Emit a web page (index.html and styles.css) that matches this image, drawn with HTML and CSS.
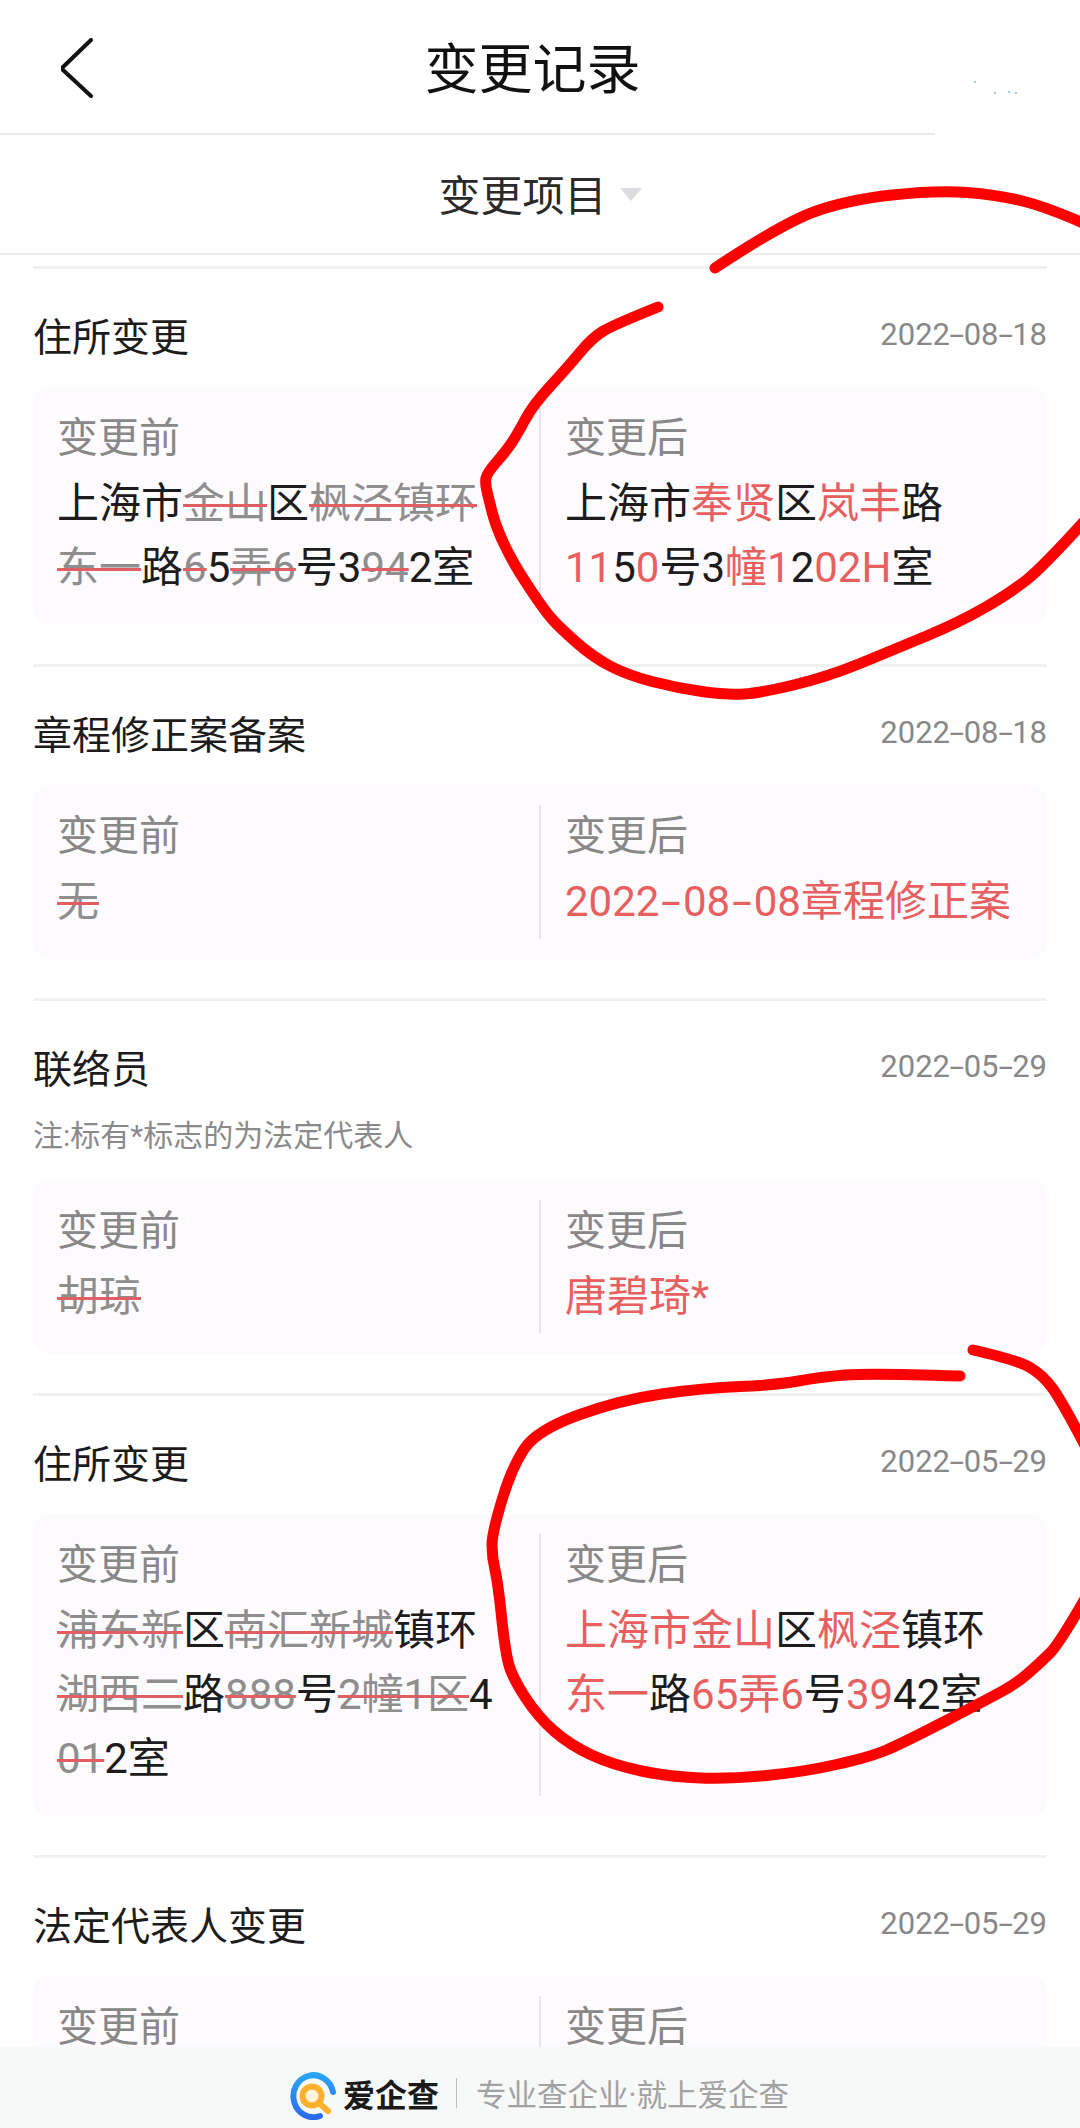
FILE: index.html
```html
<!DOCTYPE html>
<html lang="zh-CN">
<head>
    <meta charset="UTF-8">
    <meta name="viewport" content="width=device-width, initial-scale=1.0">
    <title>变更记录</title>
    <link rel="stylesheet" href="styles.css">
</head>
<body>

<header class="nav">
    <svg class="back" width="32" height="60" viewBox="0 0 32 60">
        <path d="M30 2 L2 29 Q1 30 2 32 L30 58"/>
    </svg>
    <h1 class="nav-title">变更记录</h1>
</header>
<div class="nav-line"></div>

<div class="filter">
    <span>变更项目</span>
    <i class="caret"></i>
</div>

<main class="list">
    <section class="item">
        <div class="item-head">
            <h2>住所变更</h2>
            <span class="date">2022<i class="dash">-</i>08<i class="dash">-</i>18</span>
        </div>
        <div class="card">
            <div class="col">
                <div class="label">变更前</div>
                <p>上海市<s>金山</s>区<s>枫泾镇环</s><br><s>东一</s>路<s>6</s>5<s>弄6</s>号3<s>94</s>2室</p>
            </div>
            <div class="col">
                <div class="label">变更后</div>
                <p>上海市<b>奉贤</b>区<b>岚丰</b>路<br><b>11</b>5<b>0</b>号3<b>幢1</b>2<b>02H</b>室</p>
            </div>
        </div>
    </section>

    <section class="item">
        <div class="item-head">
            <h2>章程修正案备案</h2>
            <span class="date">2022<i class="dash">-</i>08<i class="dash">-</i>18</span>
        </div>
        <div class="card">
            <div class="col">
                <div class="label">变更前</div>
                <p><s>无</s></p>
            </div>
            <div class="col">
                <div class="label">变更后</div>
                <p><b>2022<i class="dash">-</i>08<i class="dash">-</i>08章程修正案</b></p>
            </div>
        </div>
    </section>

    <section class="item">
        <div class="item-head">
            <h2>联络员</h2>
            <span class="date">2022<i class="dash">-</i>05<i class="dash">-</i>29</span>
        </div>
        <div class="note">注:标有*标志的为法定代表人</div>
        <div class="card">
            <div class="col">
                <div class="label">变更前</div>
                <p><s>胡琼</s></p>
            </div>
            <div class="col">
                <div class="label">变更后</div>
                <p><b>唐碧琦*</b></p>
            </div>
        </div>
    </section>

    <section class="item">
        <div class="item-head">
            <h2>住所变更</h2>
            <span class="date">2022<i class="dash">-</i>05<i class="dash">-</i>29</span>
        </div>
        <div class="card">
            <div class="col">
                <div class="label">变更前</div>
                <p><s>浦东新</s>区<s>南汇新城</s>镇环<br><s>湖西二</s>路<s>888</s>号<s>2幢1区</s>4<br><s>01</s>2室</p>
            </div>
            <div class="col">
                <div class="label">变更后</div>
                <p><b>上海市金山</b>区<b>枫泾</b>镇环<br><b>东一</b>路<b>65弄6</b>号<b>39</b>42室</p>
            </div>
        </div>
    </section>

    <section class="item">
        <div class="item-head">
            <h2>法定代表人变更</h2>
            <span class="date">2022<i class="dash">-</i>05<i class="dash">-</i>29</span>
        </div>
        <div class="card">
            <div class="col">
                <div class="label">变更前</div>
            </div>
            <div class="col">
                <div class="label">变更后</div>
            </div>
        </div>
    </section>
</main>

<footer class="foot">
    <svg class="foot-logo" width="46" height="48" viewBox="0 0 46 48">
        <defs>
            <linearGradient id="ring" x1="0" y1="0" x2="0" y2="1">
                <stop offset="0" stop-color="#2aa5f4"/>
                <stop offset="1" stop-color="#2b6bf0"/>
            </linearGradient>
        </defs>
        <path d="M43 20 A20 21 0 1 0 30 44" fill="none" stroke="url(#ring)" stroke-width="6" stroke-linecap="round"/>
        <circle cx="22" cy="24" r="9.5" fill="#fff3dc" stroke="#fdb02c" stroke-width="6"/>
        <path d="M29 31 L38 39" fill="none" stroke="#fdb02c" stroke-width="6" stroke-linecap="round"/>
    </svg>
    <span class="foot-name">爱企查</span>
    <i class="foot-sep"></i>
    <span class="foot-tag">专业查企业·就上爱企查</span>
</footer>

<!-- pen marks drawn on top of the page -->
<svg class="ink" width="1080" height="2128" viewBox="0 0 1080 2128">
    <path d="M715 268 Q783 223 815 211.5 Q847 200 892 195 Q937 190 967.5 192.5 Q998 195 1022.5 201 Q1047 207 1090 226"/>
    <path d="M658 307 Q613 325 602.5 331.5 Q592 338 579.5 353 Q567 368 550 386.5 Q533 405 525.5 419 Q518 433 512.5 441.5 Q507 450 497 461.5 Q487 473 486 478 Q485 483 487 491.5 Q489 500 492.5 513.5 Q496 527 504.5 545 Q513 563 528.5 586.5 Q544 610 552 619 Q560 628 576.5 642.5 Q593 657 610 666 Q627 675 652 681.5 Q677 688 702 691.5 Q727 695 743.5 694 Q760 693 793.5 685 Q827 677 860 663.5 Q893 650 926.5 636 Q960 622 985 607.5 Q1010 593 1026.5 580 Q1043 567 1090 515"/>
    <path d="M960 1376 Q870 1373 845 1375 Q820 1377 798.5 1381 Q777 1385 740 1386.5 Q703 1388 661.5 1394 Q620 1400 578.5 1415 Q537 1430 524.5 1448.5 Q512 1467 502 1500 Q492 1533 492 1545 Q492 1557 495 1570 Q498 1583 501.5 1616.5 Q505 1650 508.5 1663.5 Q512 1677 525 1697 Q538 1717 554 1731 Q570 1745 591.5 1755 Q613 1765 641.5 1771 Q670 1777 700 1778 Q730 1779 766.5 1775.5 Q803 1772 836.5 1764.5 Q870 1757 886.5 1750 Q903 1743 946.5 1720.5 Q990 1698 1003.5 1690.5 Q1017 1683 1028.5 1673 Q1040 1663 1050 1653 Q1060 1643 1090 1590"/>
    <path d="M973 1350 Q1017 1360 1030 1367.5 Q1043 1375 1053 1389 Q1063 1403 1090 1455"/>
    <g class="specks">
        <circle cx="975" cy="82" r="1"/>
        <circle cx="995" cy="93" r="1"/>
        <circle cx="1009" cy="92" r="1"/>
        <circle cx="1016" cy="93" r="1"/>
    </g>
</svg>

</body>
</html>
```

FILE: styles.css
```css
* {
    box-sizing: border-box;
}
html, body {
    margin: 0;
    height: 2128px;
}
body {
    position: relative;
    display: flex;
    flex-direction: column;
    overflow: hidden;
    background: #fff;
    color: #222;
    font-family: Roboto, "Noto Sans CJK SC", sans-serif;
}

/* top bar */
.nav {
    height: 133px;
    flex: none;
    display: flex;
    align-items: center;
    padding: 3px 14px 0 61px;
}
.back {
    flex: none;
    fill: none;
    stroke: #111;
    stroke-width: 4;
    stroke-linecap: round;
    stroke-linejoin: round;
}
.nav-title {
    flex: 1;
    margin: 0;
    padding: 0 94px 6px 0;
    text-align: center;
    font-size: 54px;
    font-weight: 400;
    color: #111;
}
.nav-line {
    flex: none;
    width: 935px;
    height: 2px;
    background: #e8e8e8;
}

/* filter row */
.filter {
    flex: none;
    height: 120px;
    display: flex;
    align-items: center;
    justify-content: center;
    gap: 13px;
    padding-bottom: 4px;
    font-size: 42px;
    color: #2a2a2a;
    border-bottom: 2px solid #ececec;
}
.caret {
    margin-top: 4px;
    border-left: 11px solid transparent;
    border-right: 11px solid transparent;
    border-top: 13px solid #dcdce0;
}

/* change list */
.list {
    flex: 1;
    min-height: 0;
    overflow: hidden;
    margin-top: 11px;
    padding: 0 33px;
}
.item {
    border-top: 3px solid #f1f1f1;
    padding: 35px 0 39px;
}
.item-head {
    height: 60px;
    display: flex;
    align-items: center;
    justify-content: space-between;
}
.item-head h2 {
    margin: 0;
    font-size: 39px;
    font-weight: 400;
    color: #1c1c1c;
}
.date {
    font-size: 31px;
    color: #888;
}
.date .dash {
    width: .44em;
}
.note {
    margin-top: 19px;
    font-size: 30px;
    line-height: 42px;
    color: #8a8a8a;
}
.card {
    margin-top: 23px;
    padding: 20px 0;
    display: flex;
    background: #fefbfe;
    border-radius: 16px;
}
.col {
    flex: 1;
    padding: 0 20px 5px 24px;
}
.col + .col {
    border-left: 2px solid #e9e6e9;
}
.label {
    height: 65px;
    line-height: 62px;
    font-size: 41px;
    color: #888;
}
.col p {
    margin: 0;
    font-size: 42px;
    line-height: 64px;
    color: #1c1c1c;
}
.col s {
    color: #8e8e8e;
    text-decoration: line-through #df5f62 3px;
}
.col b {
    font-weight: 400;
    color: #e85f60;
}
.dash {
    display: inline-block;
    width: .56em;
    text-align: center;
    font-style: normal;
    transform: scaleX(1.7);
}

/* bottom banner */
.foot {
    flex: none;
    height: 81px;
    display: flex;
    align-items: center;
    padding: 11px 0 0 290px;
    background: #f7f8f8;
}
.foot-logo {
    flex: none;
    margin-top: 6px;
}
.foot-name {
    margin-left: 7px;
    font-size: 32px;
    font-weight: 700;
    color: #1a1a1a;
}
.foot-sep {
    width: 1px;
    height: 30px;
    margin: 0 19px 0 17px;
    background: #bbb;
}
.foot-tag {
    font-size: 30.5px;
    color: #a2a2a2;
}

/* pen marks */
.ink {
    position: absolute;
    left: 0;
    top: 0;
    fill: none;
    stroke: #f00;
    stroke-width: 11;
    stroke-linecap: round;
    stroke-linejoin: round;
    pointer-events: none;
}
.specks {
    fill: #8fb4dc;
    stroke: none;
}
```
